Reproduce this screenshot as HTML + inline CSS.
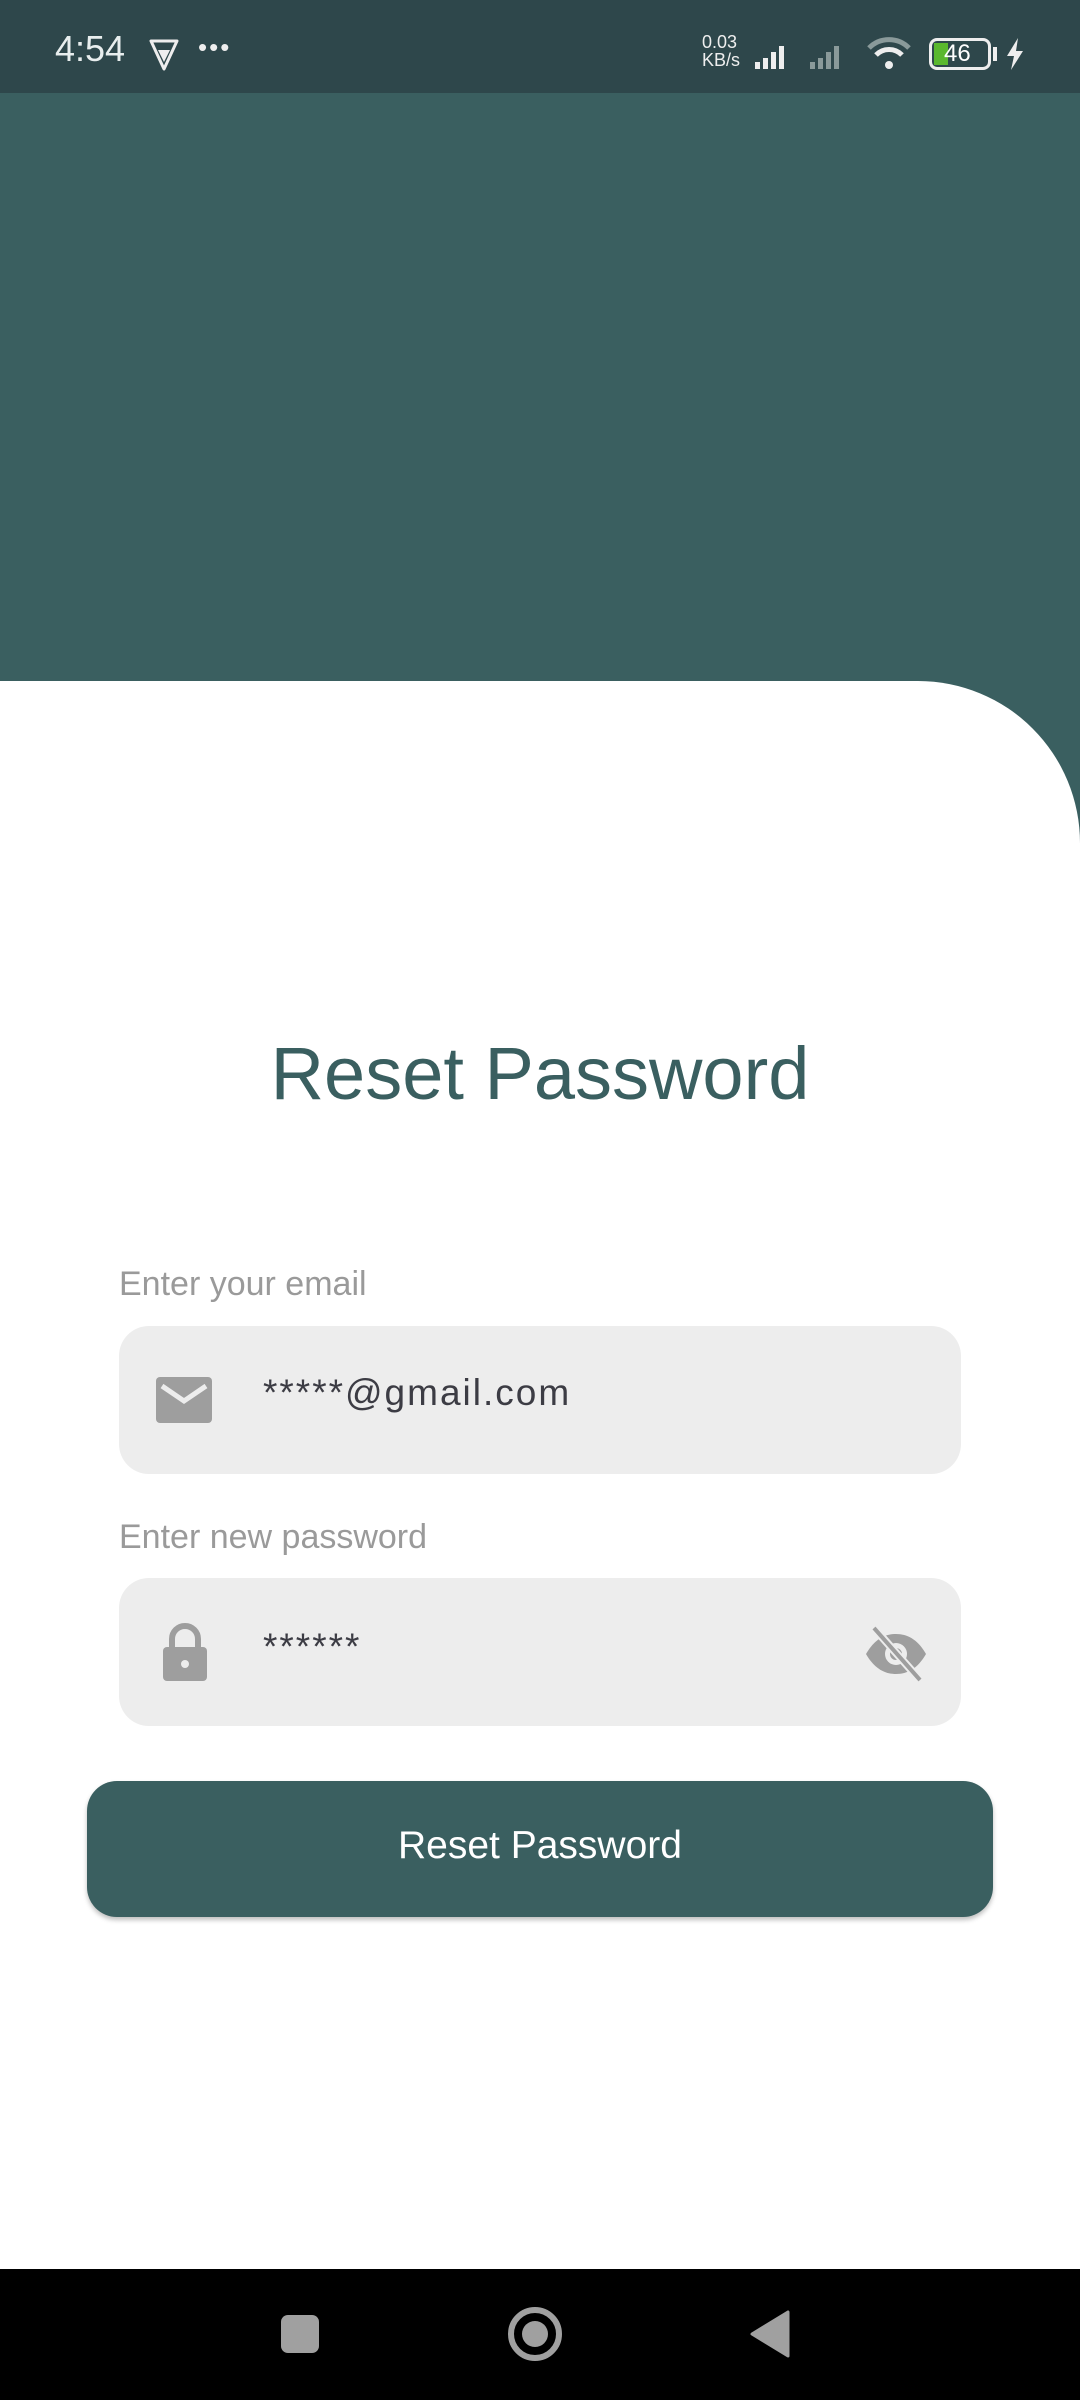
<!DOCTYPE html>
<html><head><meta charset="utf-8"><style>
*{margin:0;padding:0;box-sizing:border-box}
body{width:1080px;height:2400px;background:#fff;font-family:"Liberation Sans",sans-serif;position:relative;overflow:hidden}
.abs{position:absolute}
.sb{left:0;top:0;width:1080px;height:93px;background:#2e474b}
.hd{left:0;top:93px;width:1080px;height:750px;background:#3a5f60}
.wh{left:0;top:681px;width:1080px;height:1600px;background:#fff;border-top-right-radius:162px}
.title{left:0;width:1080px;top:1034px;text-align:center;font-size:74px;color:#3a5f60;line-height:80px}
.lbl{left:119px;font-size:34px;color:#9a9a9a;line-height:36px}
.fld{left:119px;width:842px;height:148px;background:#ededed;border-radius:30px}
.txt{font-size:37px;color:#3c3c44;letter-spacing:2px}
.btn{left:87px;top:1781px;width:906px;height:136px;background:#3a5f60;border-radius:30px;box-shadow:0 3px 5px rgba(0,0,0,.25);color:#fff;font-size:39px;text-align:center;line-height:130px}
.nav{left:0;top:2269px;width:1080px;height:131px;background:#000}
</style></head><body>
<div class="abs sb"></div>
<div class="abs" style="left:55px;top:28px;color:#e8eeee;font-size:36px">4:54</div>
<svg class="abs" style="left:148px;top:38px" width="32" height="34" viewBox="0 0 32 34"><path d="M3 3h26l-13 28z" fill="none" stroke="#eee" stroke-width="3" stroke-linejoin="round"/><path d="M10 12h12l-6 12z" fill="#eee"/></svg>
<div class="abs" style="left:198px;top:32px;color:#eee;font-size:26px;letter-spacing:2px">•••</div>
<div class="abs" style="left:702px;top:33px;color:#eee;font-size:18px;line-height:18px">0.03<br>KB/s</div>
<svg class="abs" style="left:755px;top:38px" width="100" height="32"><g fill="#eee"><rect x="0" y="24" width="5" height="7"/><rect x="8" y="20" width="5" height="11"/><rect x="16" y="14" width="5" height="17"/><rect x="24" y="8" width="5" height="23"/></g><g fill="#8a9a9a"><rect x="55" y="24" width="5" height="7"/><rect x="63" y="20" width="5" height="11"/><rect x="71" y="14" width="5" height="17"/><rect x="79" y="8" width="5" height="23"/></g></svg>
<svg class="abs" style="left:866px;top:36px" width="46" height="36" viewBox="0 0 46 36"><path d="M3 12a28 28 0 0 1 40 0" stroke="#8a9a9a" stroke-width="5" fill="none"/><path d="M10 19a18 18 0 0 1 26 0" stroke="#eee" stroke-width="5" fill="none"/><circle cx="23" cy="29" r="4" fill="#eee"/></svg>
<div class="abs" style="left:929px;top:38px;width:62px;height:32px;border:3px solid #eee;border-radius:8px"></div>
<div class="abs" style="left:934px;top:43px;width:14px;height:22px;background:#5ab82e"></div>
<div class="abs" style="left:944px;top:38px;color:#fff;font-size:24px;line-height:32px">46</div>
<div class="abs" style="left:993px;top:47px;width:4px;height:14px;background:#eee"></div>
<svg class="abs" style="left:1004px;top:38px" width="22" height="32" viewBox="0 0 22 32"><path d="M14 0L3 18h7l-3 14 12-19h-7z" fill="#eee"/></svg>
<div class="abs hd"></div>
<div class="abs wh"></div>
<div class="abs title">Reset Password</div>
<div class="abs lbl" style="top:1266px">Enter your email</div>
<div class="abs fld" style="top:1326px"></div>
<svg class="abs" style="left:156px;top:1377px" width="56" height="46" viewBox="0 0 56 46"><rect x="0" y="0" width="56" height="46" rx="4" fill="#9e9e9e"/><path d="M6 9l22 15 22-15" stroke="#ededed" stroke-width="5" fill="none"/></svg>
<div class="abs txt" style="left:263px;top:1372px">*****@gmail.com</div>
<div class="abs lbl" style="top:1519px">Enter new password</div>
<div class="abs fld" style="top:1578px"></div>
<svg class="abs" style="left:161px;top:1621px" width="48" height="62" viewBox="0 0 48 62"><path d="M11 28v-10a13 13 0 0 1 26 0v10" stroke="#9e9e9e" stroke-width="6" fill="none"/><rect x="2" y="26" width="44" height="34" rx="4" fill="#9e9e9e"/><circle cx="24" cy="43" r="4" fill="#ededed"/></svg>
<div class="abs txt" style="left:263px;top:1626px">******</div>
<svg class="abs" style="left:864px;top:1626px" width="64" height="56" viewBox="0 0 64 56"><path d="M2 28C10 14 20 8 32 8s22 6 30 20c-8 14-18 20-30 20S10 42 2 28z" fill="#9e9e9e"/><circle cx="32" cy="28" r="11" fill="#ededed"/><circle cx="32" cy="28" r="6" fill="#9e9e9e"/><path d="M10 2l46 52" stroke="#ededed" stroke-width="8"/><path d="M10 2l46 52" stroke="#9e9e9e" stroke-width="4"/></svg>
<div class="abs btn">Reset Password</div>
<div class="abs nav"></div>
<div class="abs" style="left:281px;top:2315px;width:38px;height:38px;border-radius:7px;background:#a0a0a0"></div>
<div class="abs" style="left:508px;top:2307px;width:54px;height:54px;border-radius:50%;border:6px solid #a0a0a0"></div>
<div class="abs" style="left:522px;top:2321px;width:26px;height:26px;border-radius:50%;background:#a0a0a0"></div>
<svg class="abs" style="left:748px;top:2310px" width="42" height="48"><path d="M40 2v44L4 24z" fill="#a0a0a0" stroke="#a0a0a0" stroke-width="3" stroke-linejoin="round"/></svg>
</body></html>
